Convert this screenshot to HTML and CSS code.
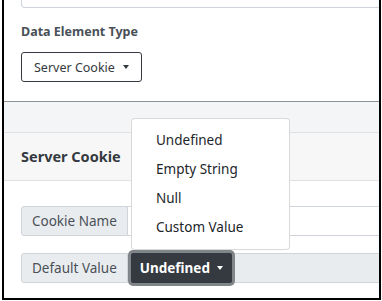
FILE: index.html
```html
<html>
    <head>
        <title>Data Element</title>
        <meta name="viewport" content="width=device-width" />
        <link rel="stylesheet" href="styles.css">
    </head>
    <body>
        <div class="frame">
            <section class="type-section">
                <div class="prev-field"></div>
                <label class="field-label">Data Element Type</label>
                <button class="btn btn-outline">Server Cookie <span class="caret"></span></button>
            </section>

            <div class="band"></div>
            <div class="card-header">Server Cookie</div>

            <div class="card-body">
                <div class="input-group">
                    <span class="addon">Cookie Name</span>
                    <span class="field"></span>
                </div>

                <div class="input-group dropup">
                    <span class="addon">Default Value</span>
                    <button class="btn btn-dark">Undefined <span class="caret"></span></button>
                    <span class="field readonly"></span>

                    <ul class="menu">
                        <li>Undefined</li>
                        <li>Empty String</li>
                        <li>Null</li>
                        <li>Custom Value</li>
                    </ul>
                </div>
            </div>
        </div>
    </body>
</html>
```

FILE: styles.css
```css
html {
    font-size: 14px;
}
body {
    margin: 0;
    color: #212529;
    background: #fff;
    font-family: "Noto Sans", "Open Sans", sans-serif;
}

.frame {
    position: relative;
    box-sizing: border-box;
    height: 300px;
    margin: 0 1px 0 2px;
    border: 2px solid #000;
    border-top: 0;
    overflow: hidden;
}

.type-section {
    padding: 0 0 19px 17px;
    border-bottom: 1px solid #8e9397;
}

.prev-field {
    height: 7px;
    margin-right: -20px;
    border: 1px solid #ced4da;
    border-top: 0;
    border-radius: 0 0 0 4px;
}

.field-label {
    display: block;
    margin-top: 14px;
    font-size: 12.5px;
    font-weight: bold;
    line-height: 20px;
    color: #495057;
}

.btn {
    display: inline-flex;
    align-items: center;
    box-sizing: border-box;
    font-family: inherit;
    white-space: nowrap;
    cursor: pointer;
}

.btn-outline {
    height: 30px;
    margin-top: 10px;
    padding: 0 12px;
    gap: 8px;
    font-size: 12.5px;
    color: #343a40;
    background: #fff;
    border: 1px solid #343a40;
    border-radius: 3px;
}

.caret {
    width: 0;
    height: 0;
    border-top: 4px solid currentColor;
    border-left: 3.5px solid transparent;
    border-right: 3.5px solid transparent;
}

.band {
    height: 30px;
    background: #f4f5f6;
    border-bottom: 1px solid #dee2e6;
}

.card-header {
    height: 47px;
    padding-left: 17px;
    line-height: 47px;
    font-size: 14.5px;
    font-weight: bold;
    color: #343a40;
    background: #f7f7f8;
    border-bottom: 1px solid #dee2e6;
}

.card-body {
    padding: 25px 0 0 17px;
}

.input-group {
    display: flex;
    align-items: center;
}

.input-group + .input-group {
    margin-top: 14px;
}

.dropup {
    position: relative;
}

.addon {
    display: flex;
    align-items: center;
    box-sizing: border-box;
    height: 30px;
    padding: 0 10px;
    font-size: 13.5px;
    color: #495057;
    background: #e9ecef;
    border: 1px solid #ced4da;
    border-radius: 3px 0 0 3px;
}

.field {
    flex: 1;
    box-sizing: border-box;
    height: 30px;
    margin-right: -20px;
    border: 1px solid #ced4da;
    border-left: 0;
}

.field.readonly {
    background: #e9ecef;
}

.btn-dark {
    height: 36px;
    padding: 0 9px;
    gap: 7px;
    font-size: 13.5px;
    font-weight: bold;
    color: #fff;
    background: #343a40;
    border: 3px solid #80858a;
    border-radius: 5px;
}

.menu {
    position: absolute;
    bottom: 100%;
    left: 110px;
    box-sizing: border-box;
    width: 159px;
    margin: 0;
    padding: 7px 0;
    list-style: none;
    background: #fff;
    border: 1px solid rgba(0, 0, 0, 0.15);
    border-radius: 4px;
}

.menu li {
    padding: 4px 24px;
    font-size: 13.5px;
    line-height: 21px;
    color: #212529;
}
```
